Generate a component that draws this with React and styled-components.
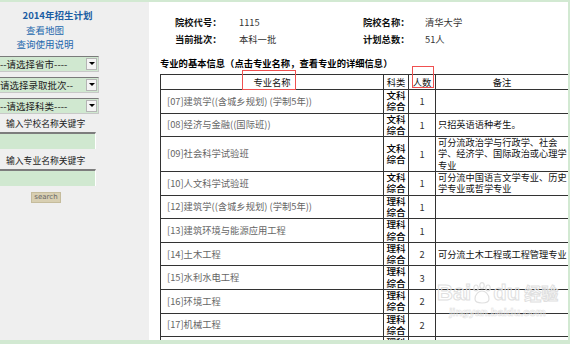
import React from 'react'
import styled, { createGlobalStyle } from 'styled-components';

const GlobalStyle = createGlobalStyle`
    html, body {
        margin: 0;
        padding: 0;
        background: #fff;
    }
    body {
        font-family: "Noto Sans CJK SC", "Liberation Sans", sans-serif;
    }
`;

const rows = [
    { name: '[07]建筑学((含城乡规划) (学制5年))', kind: '文科', num: 1, note: '' },
    { name: '[08]经济与金融((国际班))', kind: '文科', num: 1, note: '只招英语语种考生。' },
    { name: '[09]社会科学试验班', kind: '文科', num: 1, note: '可分流政治学与行政学、社会学、经济学、国际政治或心理学专业' },
    { name: '[10]人文科学试验班', kind: '文科', num: 1, note: '可分流中国语言文学专业、历史学专业或哲学专业' },
    { name: '[12]建筑学((含城乡规划) (学制5年))', kind: '理科', num: 1, note: '' },
    { name: '[13]建筑环境与能源应用工程', kind: '理科', num: 1, note: '' },
    { name: '[14]土木工程', kind: '理科', num: 2, note: '可分流土木工程或工程管理专业' },
    { name: '[15]水利水电工程', kind: '理科', num: 3, note: '' },
    { name: '[16]环境工程', kind: '理科', num: 2, note: '' },
    { name: '[17]机械工程', kind: '理科', num: 2, note: '' },
    { name: '[18]车辆工程', kind: '理科', num: 2, note: '' },
];

const selects = ['--请选择省市----', '请选择录取批次--', '--请选择科类----'];

function App() {
    return (
        <Page>
            <GlobalStyle />
            <Body>
                <Sidebar>
                    <Title>2014年招生计划</Title>
                    <SideLink>查看地图</SideLink>
                    <SideLink>查询使用说明</SideLink>
                    <SelectList>
                        {selects.map((s) => (
                            <FakeSelect key={s}>
                                <span>{s}</span>
                                <Arrow />
                            </FakeSelect>
                        ))}
                    </SelectList>
                    <InputLabel first>输入学校名称关键字</InputLabel>
                    <KeyInput />
                    <InputLabel>输入专业名称关键字</InputLabel>
                    <KeyInput />
                    <SearchButton>search</SearchButton>
                </Sidebar>
                <Main>
                    <Info>
                        <Label>院校代号：</Label>
                        <Value>1115</Value>
                        <Label>院校名称：</Label>
                        <Value>清华大学</Value>
                        <Label>当前批次：</Label>
                        <Value>本科一批</Value>
                        <Label>计划总数：</Label>
                        <Value>51人</Value>
                    </Info>
                    <Heading>专业的基本信息（点击专业名称，查看专业的详细信息）</Heading>
                    <Table>
                        <colgroup>
                            <col style={{ width: 223 }} />
                            <col style={{ width: 25 }} />
                            <col style={{ width: 27 }} />
                            <col style={{ width: 133 }} />
                        </colgroup>
                        <thead>
                            <tr>
                                <Th>专业名称</Th>
                                <Th>科类</Th>
                                <Th>人数</Th>
                                <Th>备注</Th>
                            </tr>
                        </thead>
                        <tbody>
                            {rows.map((r) => (
                                <tr key={r.name}>
                                    <NameCell>{r.name}</NameCell>
                                    <KindCell>{r.kind}<br />综合</KindCell>
                                    <NumCell>{r.num}</NumCell>
                                    <NoteCell>{r.note}</NoteCell>
                                </tr>
                            ))}
                        </tbody>
                    </Table>
                </Main>
            </Body>
            <Mark $x={242} $y={70} $w={54} $h={20} />
            <Mark $x={412} $y={66} $w={22} $h={22} />
            <Watermark>
                <WaterLogo>
                    Bai
                    <svg width="22" height="22" viewBox="0 0 22 22">
                        <g fill="none" stroke="#e0e0e0" strokeWidth="1.2">
                            <ellipse cx="5" cy="6" rx="2.2" ry="3" />
                            <ellipse cx="11" cy="3.6" rx="2.2" ry="3" />
                            <ellipse cx="17" cy="6" rx="2.2" ry="3" />
                            <path d="M4 17c0-5 4-8 7-8s7 3 7 8c0 3-3 4-7 4s-7-1-7-4z" />
                        </g>
                    </svg>
                    du
                    <WaterCn>经验</WaterCn>
                </WaterLogo>
                <WaterUrl>jingyan.baidu.com</WaterUrl>
            </Watermark>
        </Page>
    );
}

const Page = styled.div`
    position: relative;
    width: 570px;
    height: 344px;
    overflow: hidden;
    background: #d2e9d2;
    padding-top: 2px;
    box-sizing: border-box;
`;

const Body = styled.div`
    display: flex;
    width: 568px;
    height: 338px;
`;

const Sidebar = styled.div`
    width: 149px;
    flex-shrink: 0;
    background: #efefef;
    padding-top: 6px;
    box-sizing: border-box;
    font-size: 9.5px;
`;

const Title = styled.div`
    width: 115px;
    text-align: center;
    line-height: 14.5px;
    color: #1b5da3;
    font-weight: bold;
    font-size: 9.5px;
`;

const SideLink = styled.div`
    width: 90px;
    text-align: center;
    line-height: 14.5px;
    color: #2468ad;
`;

const SelectList = styled.div`
    display: flex;
    flex-direction: column;
    gap: 5px;
    margin-top: 4px;
`;

const FakeSelect = styled.div`
    display: flex;
    align-items: center;
    justify-content: space-between;
    width: 99px;
    height: 16px;
    box-sizing: border-box;
    background: #d0e8d0;
    border-top: 1px solid #7a7a7a;
    border-right: 1px solid #c8c8c8;
    border-bottom: 1px solid #c8c8c8;
    color: #222;
    font-size: 9.5px;
    line-height: 14px;
    span {
        white-space: nowrap;
    }
`;

const Arrow = styled.div`
    width: 11px;
    height: 12px;
    margin-right: 1px;
    background: #f4f4f4;
    border: 1px solid #b5b5b5;
    box-sizing: border-box;
    display: flex;
    align-items: center;
    justify-content: center;
    &::after {
        content: '';
        border-left: 3px solid transparent;
        border-right: 3px solid transparent;
        border-top: 3px solid #000;
    }
`;

const InputLabel = styled.div`
    margin-top: ${(p) => (p.first ? '3px' : '5px')};
    padding-left: 6px;
    line-height: 13px;
    font-size: 8.8px;
    color: #222;
`;

const KeyInput = styled.div`
    margin-top: 2px;
    width: 96px;
    height: 17px;
    box-sizing: border-box;
    background: #d0e8d0;
    border-top: 2px solid #7d7d7d;
    border-right: 1px solid #fff;
`;

const SearchButton = styled.div`
    margin: 6px 0 0 31px;
    width: 30px;
    height: 11px;
    box-sizing: border-box;
    background: #d8cfb2;
    border: 1px solid #c5bc9c;
    color: #666;
    font-family: "DejaVu Sans", sans-serif;
    font-size: 7px;
    line-height: 9px;
    text-align: center;
`;

const Main = styled.div`
    width: 419px;
    flex-shrink: 0;
    background: #fff;
    padding-left: 11px;
    box-sizing: border-box;
    overflow: hidden;
    font-size: 9.3px;
`;

const Info = styled.div`
    display: grid;
    grid-template-columns: 64px 124px 62px auto;
    margin: 12px 0 0 15px;
    line-height: 17px;
`;

const Label = styled.div`
    font-weight: bold;
    color: #111;
`;

const Value = styled.div`
    color: #333;
`;

const Heading = styled.div`
    margin-top: 9px;
    line-height: 12px;
    font-weight: bold;
    color: #000;
    white-space: nowrap;
`;

const Table = styled.table`
    margin-top: 5px;
    width: 408px;
    table-layout: fixed;
    border-collapse: collapse;
    border: 1px solid #333;
    font-size: 9.3px;
    td, th {
        border: 1px solid #333;
        padding: 0;
    }
`;

const Th = styled.th`
    font-weight: normal;
    color: #111;
    line-height: 14px;
    text-align: center;
    white-space: nowrap;
`;

const NameCell = styled.td`
    padding-left: 6px !important;
    color: #666;
    line-height: 11.3px;
    white-space: nowrap;
`;

const KindCell = styled.td`
    color: #000;
    font-weight: 500;
    text-align: center;
    line-height: 11.3px;
    font-size: 9.6px;
`;

const NumCell = styled.td`
    color: #333;
    text-align: center;
`;

const NoteCell = styled.td`
    padding-left: 2px !important;
    color: #111;
    line-height: 11.3px;
    font-size: 9.2px;
`;

const Mark = styled.div`
    position: absolute;
    left: ${(p) => p.$x}px;
    top: ${(p) => p.$y}px;
    width: ${(p) => p.$w}px;
    height: ${(p) => p.$h}px;
    border: 1px solid #f05050;
    box-sizing: border-box;
`;

const Watermark = styled.div`
    position: absolute;
    left: 437px;
    top: 280px;
    display: flex;
    flex-direction: column;
    align-items: center;
    pointer-events: none;
`;

const WaterLogo = styled.div`
    display: flex;
    align-items: center;
    font-family: "Liberation Sans", sans-serif;
    font-size: 22px;
    font-weight: bold;
    line-height: 26px;
    color: transparent;
    -webkit-text-stroke: 1px #e0e0e0;
`;

const WaterCn = styled.span`
    margin-left: 4px;
    font-family: "Noto Sans CJK SC", sans-serif;
    font-size: 17px;
`;

const WaterUrl = styled.div`
    font-family: "Liberation Sans", sans-serif;
    font-size: 11px;
    font-weight: bold;
    color: transparent;
    -webkit-text-stroke: 0.6px #e2e2e2;
`;

export default App;
